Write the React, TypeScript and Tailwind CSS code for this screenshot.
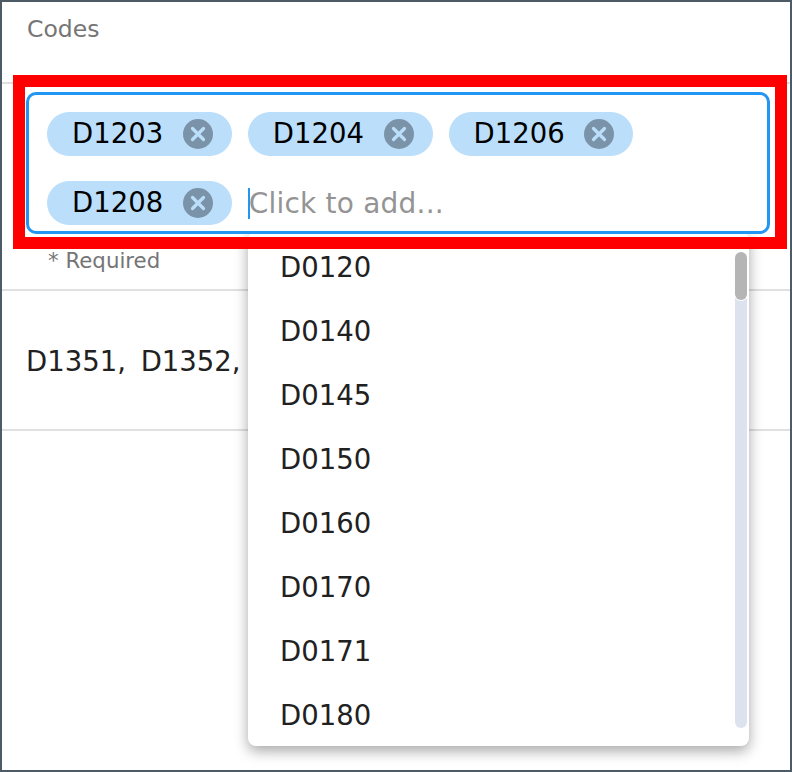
const font = "[font-family:'DejaVu_Sans',sans-serif]"

const opcoes = ['D0120', 'D0140', 'D0145', 'D0150', 'D0160', 'D0170', 'D0171', 'D0180']

function Chip({ codigo }: { codigo: string }) {
  return (
    <div className="flex items-center justify-between w-[184.8px] h-11 pl-[25px] pr-[19px] rounded-full bg-[#bbdefb] text-[27.5px] text-black">
      {codigo}
      <svg width="30" height="30" viewBox="0 0 30 30">
        <circle cx="15" cy="15" r="15" fill="#7a93a8" />
        <path d="M9.5 9.5 20.5 20.5M20.5 9.5 9.5 20.5" stroke="#bbdefb" strokeWidth="3.2" strokeLinecap="round" />
      </svg>
    </div>
  )
}

export default function App() {
  return (
    <div className={`relative w-[792px] h-[772px] border-2 border-[#4d5b66] bg-white overflow-hidden ${font}`}>
      <div className="h-[82px] border-b-2 border-[#e0e0e0] pl-[25px] pt-[11px] text-[23.5px] leading-8 text-[#757575]">Codes</div>

      <div className="relative z-20 ml-[24px] mr-[20px] mt-[8px] h-[142px] rounded-[10px] border-[3px] border-[#2196f3] bg-white pl-[18px] pt-[17px]">
        <div className="flex flex-wrap gap-x-4 gap-y-[25px]">
          <Chip codigo="D1203" />
          <Chip codigo="D1204" />
          <Chip codigo="D1206" />
          <Chip codigo="D1208" />
          <div className="flex items-center h-11">
            <span className="w-[2px] h-[31px] bg-[#2196f3]" />
            <span className="text-[28px] tracking-[0.2px] text-[#949494] translate-y-px -ml-px">Click to add...</span>
          </div>
        </div>
      </div>

      <div className="h-[55px] pl-[46px] pt-[13px] text-[21.3px] leading-7 text-[#757575]">* Required</div>

      <div className="h-[142px] border-y-2 border-[#e0e0e0] pl-[24px] pt-[52px] text-[27.5px] [word-spacing:6px] leading-9 text-[#212121]">D1351, D1352,</div>

      <div className="absolute z-10 left-[246px] top-[230px] w-[501px] h-[514px] rounded-[8px] bg-white shadow-[0_5px_14px_rgba(0,0,0,0.35)]">
        <div className="pl-[32px] pt-[4px] text-[27.5px] text-[#212121]">
          {opcoes.map(o => (
            <div key={o} className="h-16 flex items-center">{o}</div>
          ))}
        </div>
        <div className="absolute right-[2px] top-[20px] bottom-[18px] w-3 rounded-full bg-[#dde3ee]">
          <div className="w-3 h-12 rounded-full bg-[#b5b5b5] ring-1 ring-white" />
        </div>
      </div>

      <div className="absolute z-30 left-[11px] top-[73px] w-[774px] h-[174px] border-[12px] border-[#ff0000] pointer-events-none" />
    </div>
  )
}
